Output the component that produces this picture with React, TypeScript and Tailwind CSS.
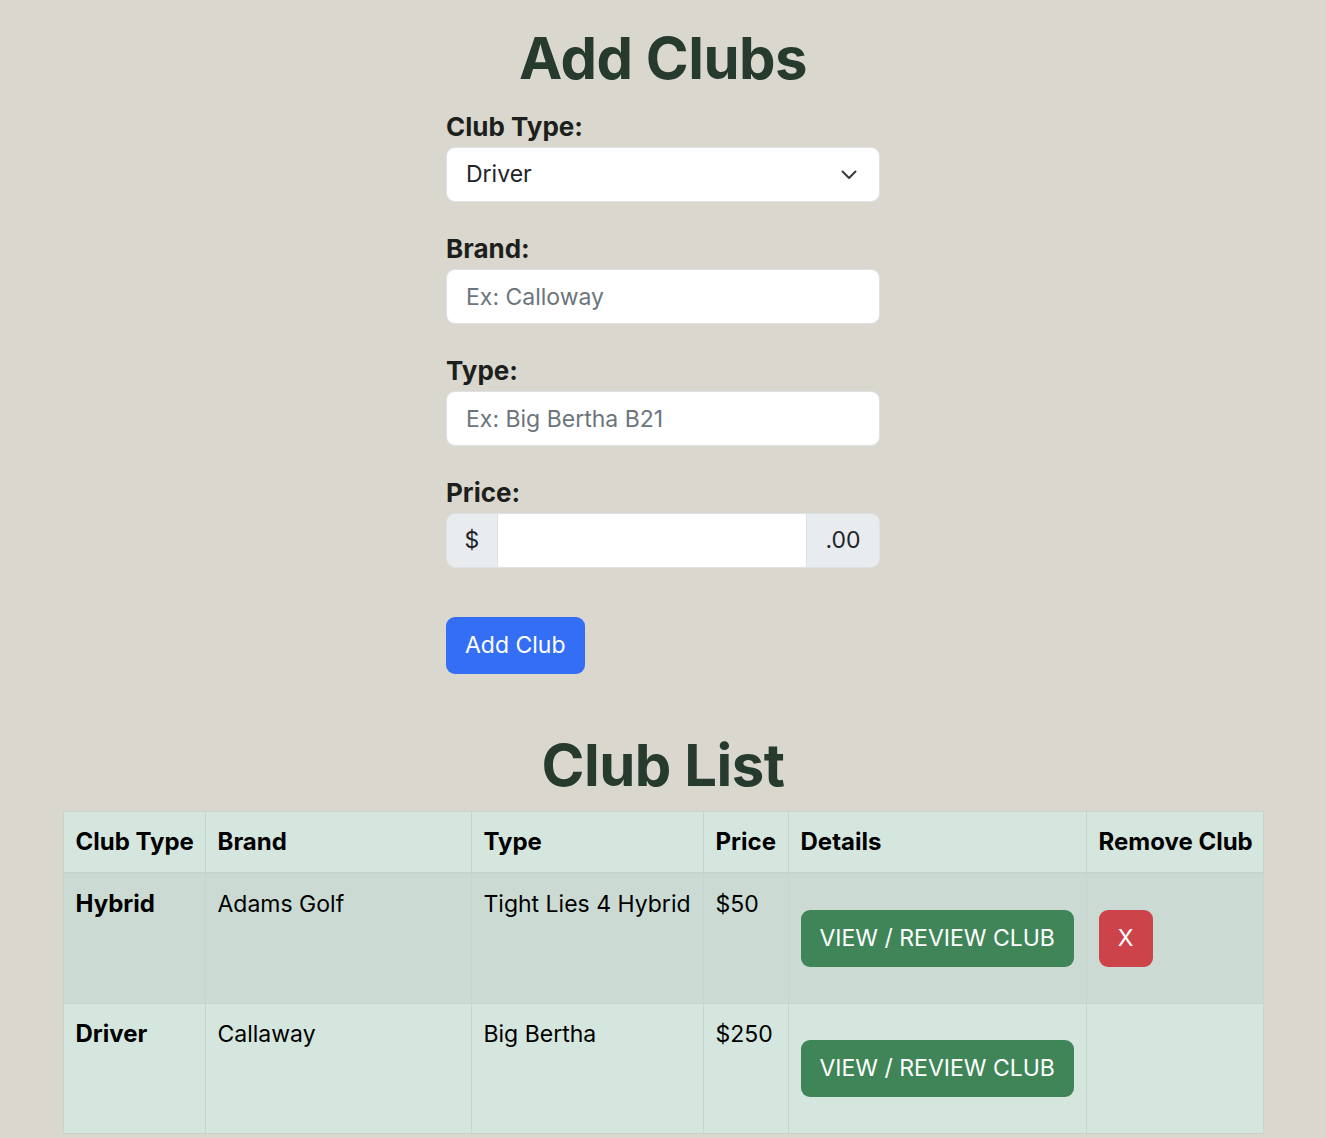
const clubs = [
  { kind: 'Hybrid', brand: 'Adams Golf', model: 'Tight Lies 4 Hybrid', price: 50, removable: true },
  { kind: 'Driver', brand: 'Callaway', model: 'Big Bertha', price: 250, removable: false },
];

function Field({ label, placeholder }: { label: string; placeholder: string }) {
  return (
    <div className="mb-5 flex flex-col">
      <label className="mt-[9px] mb-[2px] text-[26px] font-bold leading-[36px] text-[#1d1f1c]">{label}</label>
      <input
        placeholder={placeholder}
        className="h-[55px] rounded-[9px] border border-[#dee2e6] bg-white px-[19px] text-[23px] text-[#212529] outline-none placeholder:text-[#6c757d]"
      />
    </div>
  );
}

export default function App() {
  return (
    <main className="min-h-screen bg-[#dad7cf] pt-[22px] font-['Inter',sans-serif]">
      {/* Formulario */}
      <h1 className="text-center text-[58px] font-bold leading-[72px] tracking-[-0.5px] text-[#263a2e]">Add Clubs</h1>
      <form className="mx-auto mt-[6px] w-[434px]" onSubmit={(e) => e.preventDefault()}>
        <div className="mb-5 flex flex-col">
          <label className="mt-[9px] mb-[2px] text-[26px] font-bold leading-[36px] text-[#1d1f1c]">Club Type:</label>
          <div className="flex h-[55px] items-center justify-between rounded-[9px] border border-[#dee2e6] bg-white pl-[19px] pr-[22px] text-[23px] text-[#212529]">
            <span>Driver</span>
            <svg width="16" height="10" viewBox="0 0 16 10" fill="none" stroke="#343a40" strokeWidth="2" strokeLinecap="round" strokeLinejoin="round">
              <path d="M1.5 1.5 L8 8 L14.5 1.5" />
            </svg>
          </div>
        </div>
        <Field label="Brand:" placeholder="Ex: Calloway" />
        <Field label="Type:" placeholder="Ex: Big Bertha B21" />
        <div className="flex flex-col">
          <label className="mt-[9px] mb-[2px] text-[26px] font-bold leading-[36px] text-[#1d1f1c]">Price:</label>
          <div className="flex h-[55px] overflow-hidden rounded-[9px] border border-[#dee2e6] text-[23px] text-[#212529]">
            <span className="flex w-[51px] items-center justify-center border-r border-[#dee2e6] bg-[#e9ecef]">$</span>
            <input className="min-w-0 flex-1 bg-white px-[19px] outline-none" />
            <span className="flex w-[73px] items-center justify-center border-l border-[#dee2e6] bg-[#e9ecef]">.00</span>
          </div>
        </div>
        <button className="mt-[49px] h-[57px] rounded-[9px] bg-[#336ef5] px-[19px] text-[23px] text-white">Add Club</button>
      </form>

      {/* Lista */}
      <h2 className="mt-[55px] text-center text-[58px] font-bold leading-[72px] tracking-[-0.5px] text-[#263a2e]">Club List</h2>
      <table className="mx-auto mt-[10px] w-[1200px] table-fixed border-collapse whitespace-nowrap text-left text-[23px] text-black">
        <thead>
          <tr className="bg-[#d5e6de] text-[24px]">
            <th className="w-[142px] border border-b-2 border-[#c3d5cc] px-3 py-3 font-bold leading-[36px]">Club Type</th>
            <th className="w-[266px] border border-b-2 border-[#c3d5cc] px-3 py-3 font-bold leading-[36px]">Brand</th>
            <th className="w-[232px] border border-b-2 border-[#c3d5cc] px-3 py-3 font-bold leading-[36px]">Type</th>
            <th className="w-[85px] border border-b-2 border-[#c3d5cc] px-3 py-3 font-bold leading-[36px]">Price</th>
            <th className="w-[298px] border border-b-2 border-[#c3d5cc] px-3 py-3 font-bold leading-[36px]">Details</th>
            <th className="w-[177px] border border-b-2 border-[#c3d5cc] px-3 py-3 font-bold leading-[36px]">Remove Club</th>
          </tr>
        </thead>
        <tbody>
          {clubs.map((c, i) => (
            <tr key={c.kind} className={i % 2 === 0 ? 'bg-[#cbdbd3]' : 'bg-[#d5e6de]'}>
              <td className="border border-[#c3d5cc] px-3 py-3 align-top text-[24px] font-bold leading-[36px]">{c.kind}</td>
              <td className="border border-[#c3d5cc] px-3 py-3 align-top leading-[36px]">{c.brand}</td>
              <td className="border border-[#c3d5cc] px-3 py-3 align-top leading-[36px]">{c.model}</td>
              <td className="border border-[#c3d5cc] px-3 py-3 align-top leading-[36px]">${c.price}</td>
              <td className="border border-[#c3d5cc] px-3 py-3 align-top">
                <button className="my-6 h-[57px] whitespace-nowrap rounded-[9px] bg-[#3f8558] px-[19px] text-[23px] uppercase text-white">
                  View / Review Club
                </button>
              </td>
              <td className="border border-[#c3d5cc] px-3 py-3 align-top">
                {c.removable && (
                  <button className="my-6 h-[57px] w-[54px] rounded-[9px] bg-[#cd434a] text-[23px] text-white">X</button>
                )}
              </td>
            </tr>
          ))}
        </tbody>
      </table>
    </main>
  );
}
